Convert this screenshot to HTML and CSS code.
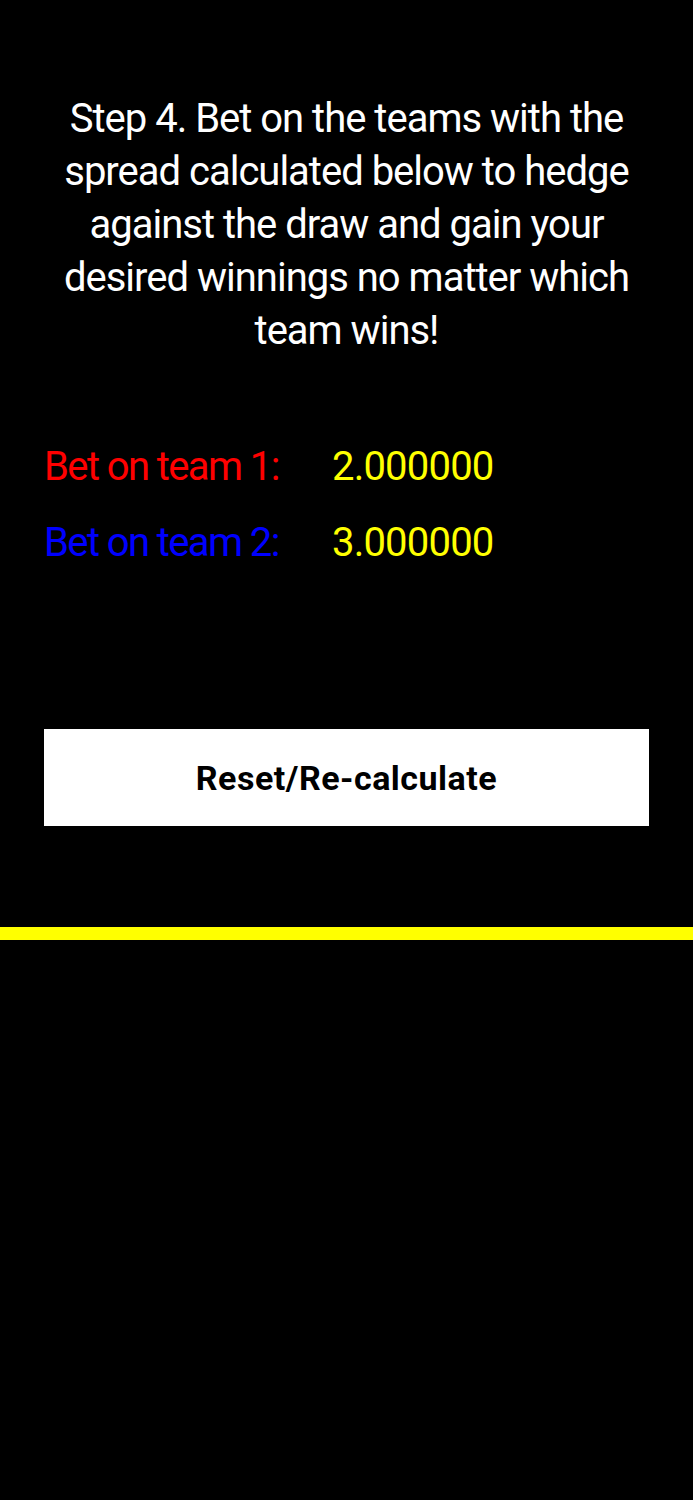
FILE: index.html
```html
<!DOCTYPE html>
<html lang="en">
<head>
    <meta charset="UTF-8">
    <meta name="viewport" content="width=device-width, initial-scale=1.0">
    <title>Hedge Calculator - Step 4</title>
    <link rel="stylesheet" href="styles.css">
</head>
<body>
    <div class="screen">
        <p class="step-text">Step 4. Bet on the teams with the spread calculated below to hedge against the draw and gain your desired winnings no matter which team wins!</p>

        <div class="results">
            <div class="result-row">
                <span class="label team-1">Bet on team 1:</span>
                <span class="amount" id="bet1">2.000000</span>
            </div>
            <div class="result-row">
                <span class="label team-2">Bet on team 2:</span>
                <span class="amount" id="bet2">3.000000</span>
            </div>
        </div>

        <button class="reset-btn" onclick="location.reload()">Reset/Re-calculate</button>

        <div class="divider"></div>
    </div>
</body>
</html>
```

FILE: styles.css
```css
body {
    margin: 0;
    background: #000;
    font-family: Roboto, "Liberation Sans", sans-serif;
    color: #fff;
}
.screen {
    padding-top: 92px;
}
.step-text {
    margin: 0 30px;
    text-align: center;
    font-size: 40px;
    line-height: 53px;
    letter-spacing: -1px;
}
.results {
    margin-top: 72px;
    padding-left: 44px;
}
.result-row {
    display: flex;
    font-size: 40px;
    line-height: 76px;
}
.label {
    width: 288px;
    letter-spacing: -1.6px;
}
.team-1 {
    color: #ff0000;
}
.team-2 {
    color: #0000ff;
}
.amount {
    color: #ffff00;
    letter-spacing: -0.8px;
}
.reset-btn {
    display: block;
    width: calc(100% - 88px);
    height: 97px;
    margin: 148px 44px 0;
    background: #fff;
    color: #000;
    border: none;
    font-family: Roboto, "Liberation Sans", sans-serif;
    font-size: 34px;
    font-weight: bold;
    letter-spacing: 0.5px;
    cursor: pointer;
}
.divider {
    height: 13px;
    margin-top: 101px;
    background: #ffff00;
}
```
